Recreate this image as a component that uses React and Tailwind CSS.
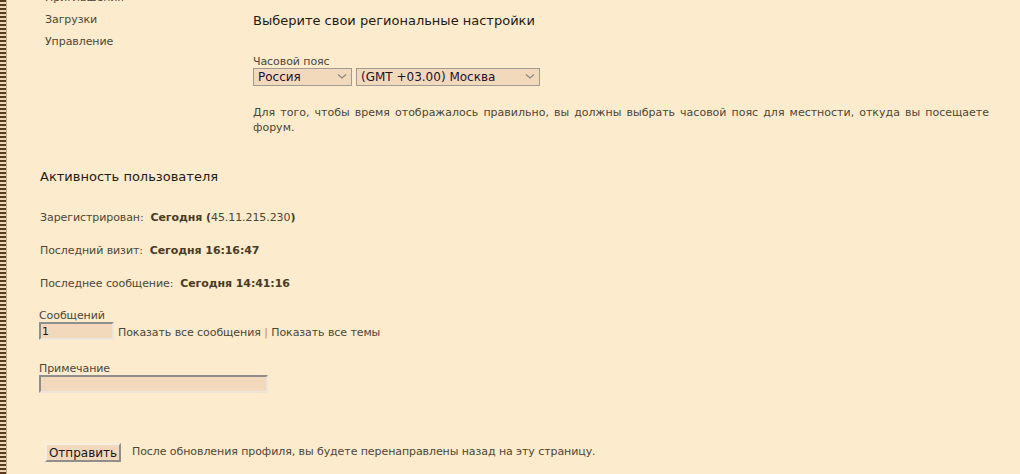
import React from 'react';

// Profile settings page of an old-style forum (beige theme).
const Chevron = () => (
  <svg className="pointer-events-none absolute right-[5px] top-[5px]" width="10" height="7" viewBox="0 0 10 7">
    <path d="M1 1.5 L5 5 L9 1.5" fill="none" stroke="#8a8a8a" strokeWidth="1.2" />
  </svg>
);

const Select = ({ width, value }) => (
  <div className="relative" style={{ width }}>
    <select
      defaultValue={value}
      className="h-[18px] w-full appearance-none border border-[#a09a94] bg-[#f2d9bc] pl-[4px] text-[12px] leading-[16px] tracking-normal text-[#1d1030] outline-none"
    >
      <option>{value}</option>
    </select>
    <Chevron />
  </div>
);

const Row = ({ label, children, first }) => (
  <div className={`${first ? 'mt-[24px]' : 'mt-[18px]'} leading-[15px]`}>
    {label}&nbsp;&nbsp;<span className="font-bold text-[#4a3b25]">{children}</span>
  </div>
);

export default function App() {
  return (
    <div className="flex min-h-[474px] bg-[#fdebcd] font-['DejaVu_Sans','Verdana',sans-serif] text-[11px] tracking-[-0.08px] text-[#4c4636]">
      <div className="w-[6px] bg-[repeating-linear-gradient(to_bottom,#5b3a1c_0px,#5b3a1c_2px,#e9d7b6_2px,#e9d7b6_4px)]" />
      <div className="w-px bg-[#bcae94]" />

      <div className="flex-1 pl-[32px] pr-[31px]">
        {/* Top: side menu + regional settings */}
        <div className="flex">
          <ul className="mt-[-13px] w-[214px] pl-[6px] leading-[22px]">
            <li>Приглашения</li>
            <li>Загрузки</li>
            <li>Управление</li>
          </ul>

          <div className="flex-1 pt-[12px]">
            <h2 className="text-[13px] leading-[18px] tracking-normal text-[#1e1a14]">Выберите свои региональные настройки</h2>
            <div className="mt-[25px] leading-[13px]">Часовой пояс</div>
            <div className="flex gap-[4px]">
              <Select width="99px" value="Россия" />
              <Select width="184px" value="(GMT +03.00) Москва" />
            </div>
            <p className="mt-[18px] text-justify leading-[15px] tracking-normal">
              Для того, чтобы время отображалось правильно, вы должны выбрать часовой пояс для местности, откуда вы посещаете форум.
            </p>
          </div>
        </div>

        {/* User activity */}
        <h2 className="mt-[33px] pl-[1px] text-[13px] leading-[18px] tracking-normal text-[#1e1a14]">Активность пользователя</h2>
        <div className="pl-[1px]">
          <Row label="Зарегистрирован:" first>
            Сегодня (<span className="font-normal text-[#4c4636]">45.11.215.230</span>)
          </Row>
          <Row label="Последний визит:">Сегодня 16:16:47</Row>
          <Row label="Последнее сообщение:">Сегодня 14:41:16</Row>
        </div>

        <div className="mt-[18px] leading-[13px]">Сообщений</div>
        <div className="flex items-center gap-[4px]">
          <input
            defaultValue="1"
            className="h-[18px] w-[75px] border-2 border-t-[#8e8e8e] border-l-[#8e8e8e] border-r-[#ece6dc] border-b-[#ece6dc] bg-[#f2d9bc] px-[1px] text-[11px] text-[#1d1030] outline-none"
          />
          <span className="pt-[3px]">
            Показать все сообщения <span className="text-[#d08a2c]">|</span> Показать все темы
          </span>
        </div>

        <div className="mt-[21px] leading-[13px]">Примечание</div>
        <input className="block h-[18px] w-[229px] border-2 border-t-[#8e8e8e] border-l-[#8e8e8e] border-r-[#ece6dc] border-b-[#ece6dc] bg-[#f2d9bc] outline-none" />

        <div className="mt-[50px] flex items-center gap-[11px] pl-[6px]">
          <button className="h-[19px] w-[76px] border-2 border-t-[#f6eee2] border-l-[#f6eee2] border-r-[#8e8e8e] border-b-[#8e8e8e] bg-[#f2d9bc] text-[12px] leading-[14px] tracking-normal text-[#1a1420]">
            Отправить
          </button>
          <span>После обновления профиля, вы будете перенаправлены назад на эту страницу.</span>
        </div>
      </div>
    </div>
  );
}
